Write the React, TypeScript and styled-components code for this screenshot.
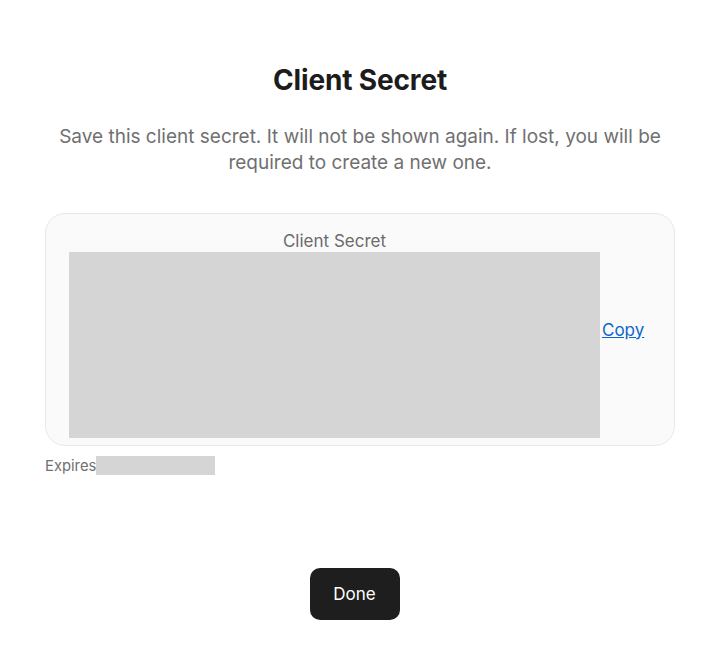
import React from "react";
import styled, { createGlobalStyle } from "styled-components";

const Global = createGlobalStyle`
  html, body { margin: 0; padding: 0; background: #ffffff; }
  body { font-family: Inter, Roboto, "Noto Sans", Arial, sans-serif; }
`;

const Page = styled.div`
  width: 713px;
  min-height: 646px;
  box-sizing: border-box;
  padding: 62px 38px 0 45px;
  display: flex;
  flex-direction: column;
`;

const Title = styled.h1`
  margin: 0;
  text-align: center;
  font-size: 28px;
  line-height: 36px;
  font-weight: 700;
  color: #1c1c1c;
  letter-spacing: -0.15px;
`;

const Subtitle = styled.p`
  margin: 26px 0 0;
  text-align: center;
  font-size: 19px;
  line-height: 26px;
  color: #707070;
`;

const Card = styled.div`
  margin-top: 37px;
  box-sizing: border-box;
  height: 233px;
  background: #fafafa;
  border: 1px solid #e8e8e8;
  border-radius: 20px;
  padding: 0 0 0 23px;
  display: flex;
  align-items: center;
`;

const SecretColumn = styled.div`
  width: 531px;
  height: 100%;
  box-sizing: border-box;
  padding: 16px 0 7px;
  display: flex;
  flex-direction: column;
`;

const Label = styled.div`
  text-align: center;
  font-size: 17px;
  line-height: 22px;
  color: #6b6b6b;
`;

const Redacted = styled.div<{ $w?: number; $h?: number }>`
  background: #d5d5d5;
  ${(p) => (p.$w ? `width: ${p.$w}px;` : "")}
  ${(p) => (p.$h ? `height: ${p.$h}px;` : "flex: 1;")}
`;

const CopyLink = styled.a`
  margin-left: 2px;
  font-size: 17px;
  color: #0a66cc;
  text-decoration: underline;
  cursor: pointer;
`;

const ExpiresRow = styled.div`
  margin-top: 10px;
  display: flex;
  align-items: center;
  font-size: 14.8px;
  color: #707070;
`;

const ButtonRow = styled.div`
  margin-top: 93px;
  display: flex;
  justify-content: center;
  padding-right: 11px;
`;

const DoneButton = styled.button`
  width: 90px;
  height: 52px;
  border: none;
  border-radius: 10px;
  background: #1e1e1e;
  color: #ffffff;
  font-family: Inter, Roboto, "Noto Sans", Arial, sans-serif;
  font-size: 17px;
  cursor: pointer;
`;

export default function App() {
  return (
    <>
      <Global />
      <Page>
        <Title>Client Secret</Title>
        <Subtitle>
          Save this client secret. It will not be shown again. If lost, you will be
          required to create a new one.
        </Subtitle>
        <Card>
          <SecretColumn>
            <Label>Client Secret</Label>
            <Redacted />
          </SecretColumn>
          <CopyLink>Copy</CopyLink>
        </Card>
        <ExpiresRow>
          Expires
          <Redacted $w={119} $h={19} />
        </ExpiresRow>
        <ButtonRow>
          <DoneButton>Done</DoneButton>
        </ButtonRow>
      </Page>
    </>
  );
}
